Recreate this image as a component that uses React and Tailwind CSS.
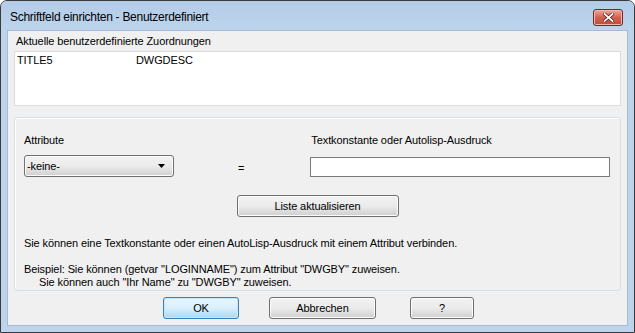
import React from "react";

const font = { fontFamily: '"Liberation Sans", Arial, sans-serif' };

function WinButton({ children, width, isDefault }) {
  return (
    <div
      className={
        "h-[22px] flex items-center justify-center rounded-[3px] border text-[11px] tracking-[-0.1px] text-black " +
        (isDefault
          ? "border-[#3c7fb1] bg-gradient-to-b from-[#eaf6fd] via-[#d9f0fc] to-[#a7d9f5] shadow-[inset_0_0_0_1px_#c7e8fa]"
          : "border-[#707070] bg-gradient-to-b from-[#f2f2f2] via-[#ebebeb] to-[#cfcfcf] shadow-[inset_0_0_0_1px_#fcfcfc]")
      }
      style={{ width }}
    >
      {children}
    </div>
  );
}

export default function App() {
  return (
    <div className="w-[635px] h-[333px] bg-white" style={font}>
      <div className="w-[635px] h-[333px] flex flex-col rounded-t-[7px] border border-[#3a3a3a] bg-[#bdd4ec] overflow-hidden">
        {/* Title bar */}
        <div className="h-[29px] shrink-0 flex items-center justify-between pl-[9px] pr-[11px] bg-gradient-to-b from-[#b3cce8] to-[#bdd4ec]">
          <span className="text-[12px] tracking-[-0.28px] text-black pt-[2px]">
            Schriftfeld einrichten - Benutzerdefiniert
          </span>
          <div className="w-[30px] h-[17px] mt-[3px] rounded-[3px] border border-[#6e2a25] bg-gradient-to-b from-[#e9a99c] via-[#d2614f] to-[#c44a36] flex items-center justify-center shadow-[inset_0_0_0_1px_#f0b8ad]">
            <svg width="11" height="9" viewBox="0 0 11 9">
              <path d="M1.5 1 L9.5 8 M9.5 1 L1.5 8" stroke="#3a1a16" strokeWidth="3.2" strokeLinecap="square" />
              <path d="M1.5 1 L9.5 8 M9.5 1 L1.5 8" stroke="#ffffff" strokeWidth="1.8" strokeLinecap="square" />
            </svg>
          </div>
        </div>

        {/* Client area */}
        <div className="mx-[6px] flex-1 mb-[6px] border border-[#a7bcd4] bg-[#f0f0f0] flex flex-col text-[11px] tracking-[-0.1px] text-black">
          <div className="pl-[8px] pt-[4px] h-[20px] leading-[13px]">Aktuelle benutzerdefinierte Zuordnungen</div>
          <div className="mx-[6px] h-[55px] bg-white border border-[#dcdcdc] flex items-start pt-[2px] pl-[2px] leading-[13px]">
            <span className="w-[119px]">TITLE5</span>
            <span>DWGDESC</span>
          </div>

          {/* Group panel */}
          <div className="mx-[6px] mt-[11px] h-[174px] rounded-[3px] border border-[#d5dfe5] bg-[#f0f0f0] shadow-[inset_1px_1px_0_#ffffff] flex flex-col leading-[13px]">
            <div className="flex pl-[9px] pt-[16px]">
              <div className="w-[150px] flex flex-col">
                <span className="h-[13px]">Attribute</span>
                <div className="mt-[8px] h-[22px] rounded-[3px] border border-[#707070] bg-gradient-to-b from-[#f2f2f2] via-[#ebebeb] to-[#cfcfcf] shadow-[inset_0_0_0_1px_#fcfcfc] flex items-center justify-between pl-[2px] pr-[8px]">
                  <span>-keine-</span>
                  <svg width="7" height="4" viewBox="0 0 7 4">
                    <path d="M0 0 H7 L3.5 4 Z" fill="#000" />
                  </svg>
                </div>
              </div>
              <div className="ml-[64px] self-end pb-[2px]">=</div>
              <div className="ml-[66px] w-[300px] flex flex-col">
                <span className="h-[13px] pl-px">Textkonstante oder Autolisp-Ausdruck</span>
                <div className="mt-[10px] h-[20px] bg-white border border-[#7a7a7a]"></div>
              </div>
            </div>
            <div className="mt-[18px] flex justify-center">
              <WinButton width={162}>Liste aktualisieren</WinButton>
            </div>
            <div className="pl-[9px] mt-[20px]">
              Sie können eine Textkonstante oder einen AutoLisp-Ausdruck mit einem Attribut verbinden.
            </div>
            <div className="pl-[9px] mt-[13px]">
              Beispiel: Sie können (getvar "LOGINNAME") zum Attribut "DWGBY" zuweisen.
            </div>
            <div className="pl-[24px]">Sie können auch "Ihr Name" zu "DWGBY" zuweisen.</div>
          </div>

          {/* Footer buttons */}
          <div className="flex pl-[155px] mt-[6px]">
            <WinButton width={76} isDefault>OK</WinButton>
            <div className="ml-[30px]">
              <WinButton width={107}>Abbrechen</WinButton>
            </div>
            <div className="ml-[34px]">
              <WinButton width={64}>?</WinButton>
            </div>
          </div>
        </div>
      </div>
    </div>
  );
}
